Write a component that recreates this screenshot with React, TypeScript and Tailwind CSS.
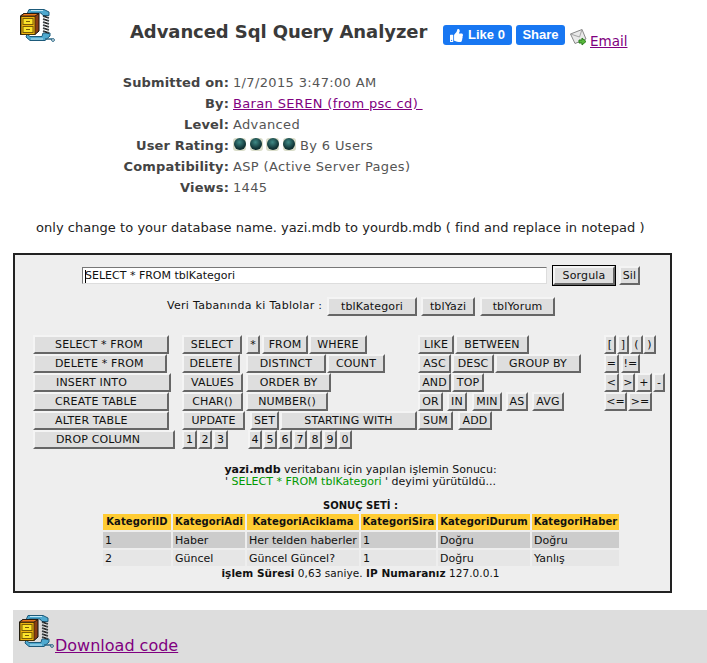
import React from 'react';
import { FaThumbsUp } from 'react-icons/fa';

const ZipIcon = () => (
  <svg width="36" height="34" viewBox="0 0 36 34" className="block shrink-0">
    {/* clamp */}
    <path d="M8 6 L10 1.5 L25 1.5 L30 4 L30 7.5 L24 7.5 L22 5 L12 5 Z" fill="#4fa9cf" stroke="#1d5a7a" strokeWidth="1" />
    <path d="M8 26 L11 28.5 L23 28.5 L24 25 L31 25 L31 28 L26 32.5 L11 32.5 L7 29 Z" fill="#4fa9cf" stroke="#1d5a7a" strokeWidth="1" />
    <path d="M12 2.5 H24 M12 31 H24" stroke="#bfe6f5" strokeWidth="1" />
    {/* spring */}
    <path d="M24 8 L30 10 M24 11 L30 13 M24 14 L30 16 M24 17 L30 19 M24 20 L30 22 M24 23 L30 25" stroke="#1b1b1b" strokeWidth="1.5" />
    <path d="M25 8 V25 M29 8 V25" stroke="#8a9aa2" strokeWidth="0.6" />
    {/* handle */}
    <path d="M26 31 H33" stroke="#2a6685" strokeWidth="1.5" />
    <circle cx="34" cy="32" r="1.4" fill="none" stroke="#2a6685" strokeWidth="1" />
    {/* box */}
    <path d="M1.5 8 L5 5.5 L20 5.5 L20 23 L16 26.5 L1.5 26.5 Z" fill="#8b3d14" stroke="#111" strokeWidth="1" />
    <path d="M1.5 8 L5 5.5 L20 5.5 L16 8 Z" fill="#ee7a1c" stroke="#111" strokeWidth="0.8" />
    <rect x="2" y="8.5" width="14" height="18" fill="#eeb40f" stroke="#3a2a05" strokeWidth="0.8" />
    <rect x="4" y="10.5" width="10" height="6" fill="#fbe32a" stroke="#7a5c08" strokeWidth="1" />
    <rect x="4" y="18.5" width="10" height="6" fill="#fbe32a" stroke="#7a5c08" strokeWidth="1" />
    <path d="M7 13.5 H11 M7 21.5 H11" stroke="#7a5c08" strokeWidth="1" />
  </svg>
);

const MailIcon = () => (
  <svg width="17" height="17" viewBox="0 0 17 17" className="block">
    <path d="M0.5 5 L12 0.5 L16 10 L5 14.5Z" fill="#e9e9e9" stroke="#888" strokeWidth="1" />
    <path d="M0.5 5 L9.5 8 L12 0.5" fill="none" stroke="#a4a4a4" strokeWidth="1" />
    <path d="M9 11 L12 11 L12 9 L16 12.5 L12 16 L12 14 L9 14Z" fill="#58b93c" stroke="#2b7d1d" strokeWidth="1" />
  </svg>
);

const Ball = () => (
  <span className="inline-flex items-center justify-center w-[13px] h-[13px] -mt-[3px] mr-[3.5px] bg-[#d9dcc9] rounded-[3px]">
    <span className="block w-[12px] h-[12px] rounded-full bg-[radial-gradient(circle_at_45%_35%,#3f8a86,#123638_60%,#0a2022)]" />
  </span>
);

const Btn = ({ label, className = '', strong = false }: { label: string; className?: string; strong?: boolean }) => (
  <button
    className={`h-[19px] shrink-0 flex items-center justify-center bg-[#dedede] text-[11px] leading-none tracking-[0.15px] text-[#111] border-2 border-t-[#f4f4f4] border-l-[#f4f4f4] border-r-[#666] border-b-[#666] ${
      strong ? 'outline outline-1 outline-black' : ''
    } ${className}`}
  >
    {label}
  </button>
);

type BtnDef = [string, string];

// each row: [label, width + left offset classes]
const col1: BtnDef[] = [
  ['SELECT * FROM', 'w-[136px] justify-start pl-[20px]'],
  ['DELETE * FROM', 'w-[134px] justify-start pl-[20px]'],
  ['INSERT INTO', 'w-[138px] justify-start pl-[21px]'],
  ['CREATE TABLE', 'w-[136px] justify-start pl-[20px]'],
  ['ALTER TABLE', 'w-[136px] justify-start pl-[20px]'],
  ['DROP COLUMN', 'w-[142px] justify-start pl-[21px]'],
];

const col2: BtnDef[][] = [
  [['SELECT', 'w-[60px]'], ['*', 'w-[14px] ml-[4px]'], ['FROM', 'w-[46px] ml-[2px]'], ['WHERE', 'w-[58px] ml-[1px]']],
  [['DELETE', 'w-[58px]'], ['DISTINCT', 'w-[80px] ml-[6px]'], ['COUNT', 'w-[58px] ml-[1px]']],
  [['VALUES', 'w-[61px]'], ['ORDER BY', 'w-[85px] ml-[3px]']],
  [['CHAR()', 'w-[61px]'], ['NUMBER()', 'w-[82px] ml-[3px]']],
  [['UPDATE', 'w-[63px]'], ['SET', 'w-[29px] ml-[5px]'], ['STARTING WITH', 'w-[137px] ml-[1px]']],
  [
    ['1', 'w-[15px]'], ['2', 'w-[14px] ml-[1px]'], ['3', 'w-[15px] ml-[1px]'],
    ['4', 'w-[14px] ml-[20px]'], ['5', 'w-[14px] ml-[1px]'], ['6', 'w-[14px] ml-[1px]'], ['7', 'w-[14px] ml-[1px]'],
    ['8', 'w-[14px] ml-[1px]'], ['9', 'w-[14px] ml-[1px]'], ['0', 'w-[14px] ml-[1px]'],
  ],
];

const col3: BtnDef[][] = [
  [['LIKE', 'w-[36px]'], ['BETWEEN', 'w-[74px] ml-[1px]']],
  [['ASC', 'w-[33px]'], ['DESC', 'w-[42px] ml-[1px]'], ['GROUP BY', 'w-[86px] ml-[1px]']],
  [['AND', 'w-[33px]'], ['TOP', 'w-[32px] ml-[1px]']],
  [['OR', 'w-[25px]'], ['IN', 'w-[20px] ml-[4px]'], ['MIN', 'w-[30px] ml-[5px]'], ['AS', 'w-[22px] ml-[4px]'], ['AVG', 'w-[32px] ml-[4px]']],
  [['SUM', 'w-[35px]'], ['ADD', 'w-[34px] ml-[5px]']],
];

const col4: BtnDef[][] = [
  [['[', 'w-[12px]'], [']', 'w-[12px] ml-[1px]'], ['(', 'w-[13px] ml-[1px]'], [')', 'w-[13px]']],
  [['=', 'w-[15px]'], ['!=', 'w-[19px] ml-[2px]']],
  [['<', 'w-[15px]'], ['>', 'w-[14px] ml-[2px]'], ['+', 'w-[16px] ml-[1px]'], ['-', 'w-[12px] ml-[1px]']],
  [['<=', 'w-[23px]'], ['>=', 'w-[24px] ml-[1px]']],
];

const ButtonColumn = ({ rows, className }: { rows: BtnDef[][]; className: string }) => (
  <div className={`flex flex-col ${className}`}>
    {rows.map((row, i) => (
      <div key={i} className="flex">
        {row.map(([label, cls]) => (
          <Btn key={label} label={label} className={cls} />
        ))}
      </div>
    ))}
  </div>
);

const meta: [string, React.ReactNode][] = [
  ['Submitted on:', '1/7/2015 3:47:00 AM'],
  ['By:', <a className="text-[#800080] underline">Baran SEREN (from psc cd)&nbsp;</a>],
  ['Level:', 'Advanced'],
  [
    'User Rating:',
    <span className="flex items-center">
      <Ball />
      <Ball />
      <Ball />
      <Ball />
      <span className="ml-[1px]">By 6 Users</span>
    </span>,
  ],
  ['Compatibility:', 'ASP (Active Server Pages)'],
  ['Views:', '1445'],
];

const headers = ['KategoriID', 'KategoriAdi', 'KategoriAciklama', 'KategoriSira', 'KategoriDurum', 'KategoriHaber'];
const colWidths = ['w-[68px]', 'w-[72px]', 'w-[112px]', 'w-[75px]', 'w-[92px]', 'w-[87px]'];
const rows = [
  ['1', 'Haber', 'Her telden haberler', '1', 'Doğru', 'Doğru'],
  ['2', 'Güncel', 'Güncel Güncel?', '1', 'Doğru', 'Yanlış'],
];

export default function App() {
  return (
    <div className="w-[707px] h-[663px] overflow-hidden bg-white font-['DejaVu_Sans','Liberation_Sans',sans-serif] text-[13px] text-[#444]">
      {/* Header */}
      <div className="flex h-[64px] pl-[19px] pt-[8px]">
        <ZipIcon />
        <h1 className="ml-[75px] mt-[12px] h-[24px] w-[313px] text-[18px] leading-[24px] font-bold tracking-[-0.08px] text-[#3a3a3a] whitespace-nowrap">
          Advanced Sql Query Analyzer
        </h1>
        <div className="flex items-start mt-[17px]">
          <div className="flex items-center justify-center gap-[5px] w-[69px] h-[20px] rounded-[3px] bg-[#1877f2] text-white font-['Liberation_Sans',sans-serif] text-[13px] font-bold">
            <FaThumbsUp className="text-[13px]" />
            Like 0
          </div>
          <div className="flex items-center justify-center ml-[4px] w-[49px] h-[20px] rounded-[3px] bg-[#1877f2] text-white font-['Liberation_Sans',sans-serif] text-[13px] font-bold">
            Share
          </div>
          <div className="ml-[5px] mt-[4px]">
            <MailIcon />
          </div>
          <a className="ml-[3px] mt-[8px] leading-[16px] text-[#800080] underline text-[13.5px]">Email</a>
        </div>
      </div>

      {/* Meta */}
      <div className="grid grid-cols-[216px_1fr] gap-x-[4px] pl-[13px] mt-[8px]">
        {meta.map(([label, value]) => (
          <React.Fragment key={label}>
            <div className="h-[21px] leading-[21px] text-right font-bold tracking-[0.15px] text-[#444]">{label}</div>
            <div className="h-[21px] leading-[21px] text-[#555] tracking-[0.35px] whitespace-nowrap">{value}</div>
          </React.Fragment>
        ))}
      </div>

      <p className="mt-[20px] pl-[36px] h-[20px] leading-[20px] tracking-[0.04px] text-[#222] whitespace-nowrap">
        only change to your database name. yazi.mdb to yourdb.mdb ( find and replace in notepad )
      </p>

      {/* Query panel */}
      <div className="mt-[15px] ml-[13px] w-[659px] h-[340px] border-2 border-[#222] bg-[#eeeeee] text-[#111] text-[11px]">
        <div className="flex items-center pl-[67px] pt-[11px]">
          <div className="w-[465px] h-[17px] bg-white border border-t-[#777] border-l-[#777] border-r-[#ddd] border-b-[#ddd] pl-[2px] leading-[15px] whitespace-nowrap">
            <span className="inline-block w-px h-[13px] -mr-px align-middle bg-black" />
            SELECT * FROM tblKategori
          </div>
          <Btn label="Sorgula" className="w-[62px] ml-[6px]" strong />
          <Btn label="Sil" className="w-[21px] ml-[4px]" />
        </div>

        <div className="flex items-center pl-[152px] mt-[12px] h-[19px]">
          <span className="w-[160px] tracking-[0.3px] whitespace-nowrap">Veri Tabanında ki Tablolar :</span>
          <Btn label="tblKategori" className="w-[90px]" />
          <Btn label="tblYazi" className="w-[54px] ml-[4px]" />
          <Btn label="tblYorum" className="w-[75px] ml-[5px]" />
        </div>

        <div className="flex mt-[19px] pl-[18px]">
          <div className="flex flex-col w-[149px] shrink-0">
            {col1.map(([label, cls]) => (
              <Btn key={label} label={label} className={cls} />
            ))}
          </div>
          <ButtonColumn rows={col2} className="w-[236px] shrink-0" />
          <ButtonColumn rows={col3} className="w-[186px] shrink-0" />
          <ButtonColumn rows={col4} className="shrink-0" />
        </div>

        {/* Result */}
        <div className="pl-[36px] mt-[15px] text-center text-[11px] leading-[12px]">
          <p>
            <b className="text-[#111]">yazi.mdb</b> veritabanı için yapılan işlemin Sonucu:
          </p>
          <p>
            ' <span className="text-[#009900]">SELECT * FROM tblKategori</span> ' deyimi yürütüldü...
          </p>
          <p className="mt-[12px] font-bold text-[10px]">SONUÇ SETİ :</p>
        </div>

        <table className="ml-[86px] w-[520px] border-separate border-spacing-[2px] text-[11px] leading-none table-fixed">
          <thead>
            <tr>
              {headers.map((h, i) => (
                <th key={h} className={`h-[16px] p-0 bg-[#ffcc33] text-[#111] font-bold text-center text-[10px] tracking-[0.1px] whitespace-nowrap ${colWidths[i]}`}>
                  {h}
                </th>
              ))}
            </tr>
          </thead>
          <tbody>
            {rows.map((row, r) => (
              <tr key={r}>
                {row.map((cell, i) => (
                  <td key={i} className={`h-[16px] p-0 pl-[2px] whitespace-nowrap ${r === 0 ? 'bg-[#cccccc]' : 'bg-[#e6e6e6]'}`}>
                    {cell}
                  </td>
                ))}
              </tr>
            ))}
          </tbody>
        </table>
        <p className="-mt-[1px] pl-[36px] text-center text-[10.5px] tracking-[0.05px] leading-[12px]">
          <b>işlem Süresi</b> 0,63 saniye. <b>IP Numaranız</b> 127.0.0.1
        </p>
      </div>

      {/* Download */}
      <div className="mt-[17px] ml-[13px] h-[60px] bg-[#dddddd] flex items-start pl-[5px] pt-[4px]">
        <ZipIcon />
        <a className="ml-[1px] mt-[22px] text-[16px] leading-[20px] text-[#800080] underline whitespace-nowrap">Download code</a>
      </div>
    </div>
  );
}
